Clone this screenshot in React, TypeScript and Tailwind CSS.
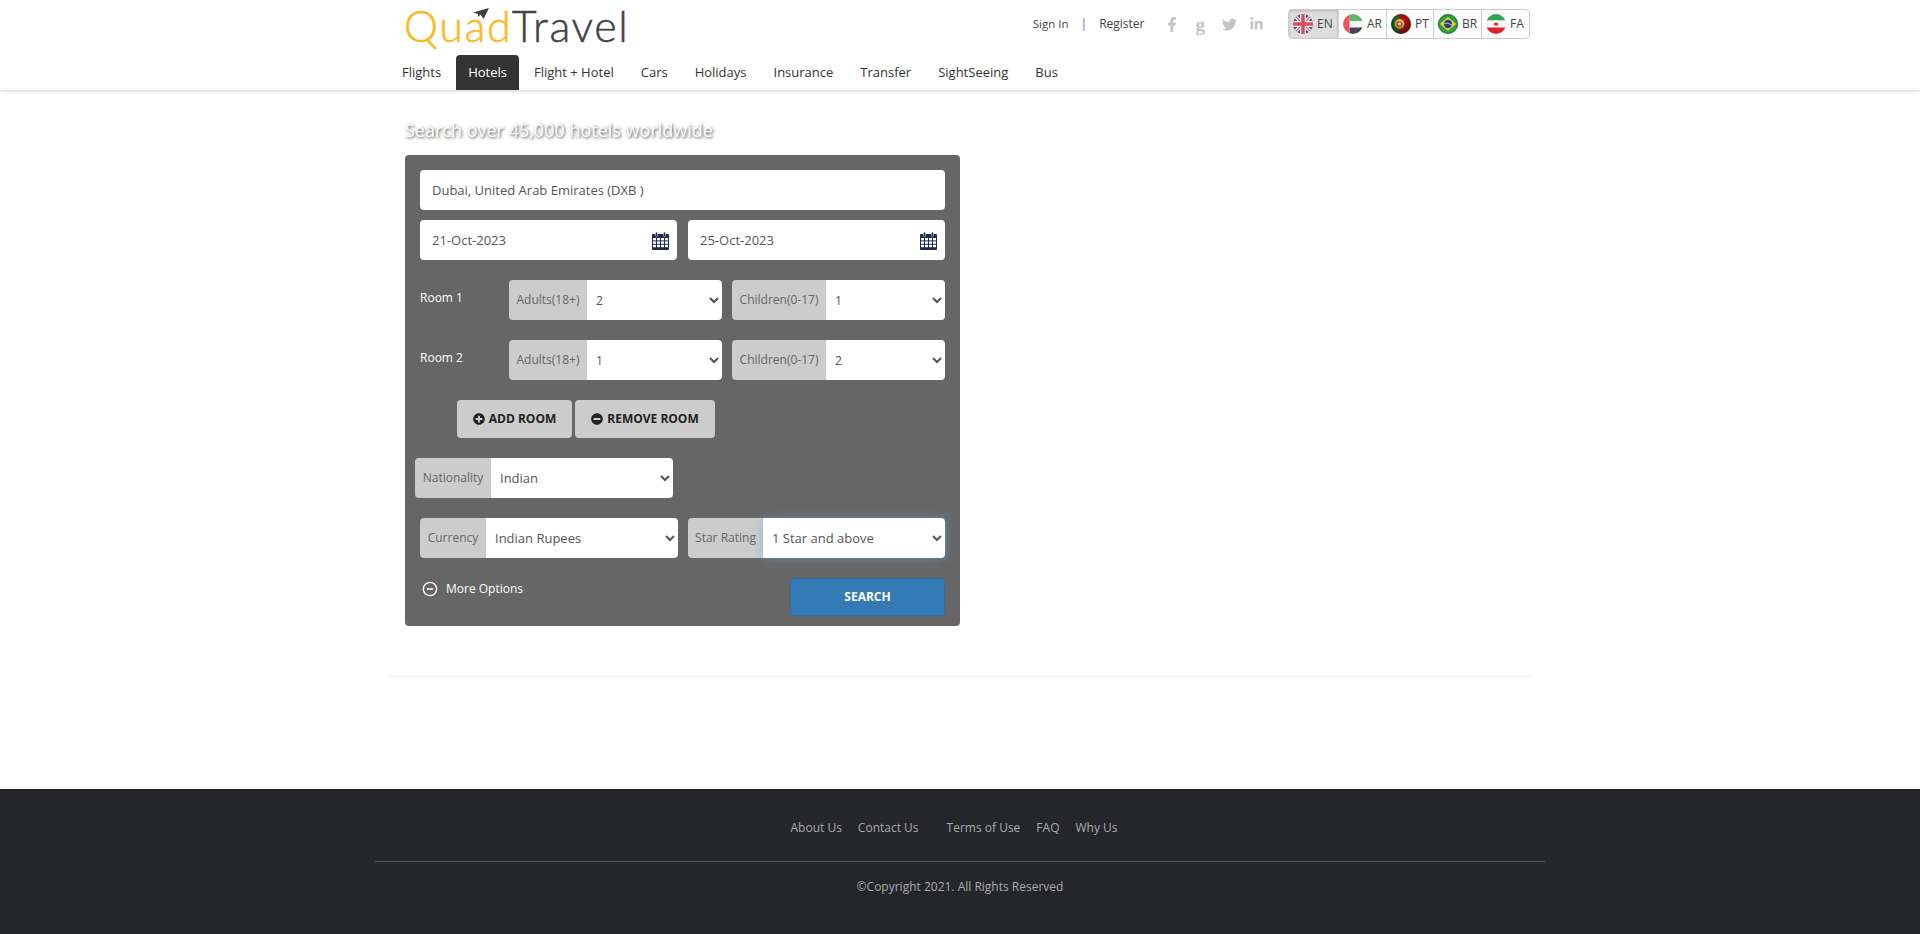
import { ReactNode } from 'react';
import { FaFacebookF, FaLinkedinIn, FaMinusCircle, FaPlusCircle, FaTwitter } from 'react-icons/fa';
import { CircleMinus } from 'lucide-react';

const NAV = ['Flights', 'Hotels', 'Flight + Hotel', 'Cars', 'Holidays', 'Insurance', 'Transfer', 'SightSeeing', 'Bus'];

function FlagEn() {
  return (
    <svg viewBox="0 0 20 20" className="h-5 w-5 shrink-0">
      <defs>
        <clipPath id="c-en"><circle cx="10" cy="10" r="10" /></clipPath>
      </defs>
      <g clipPath="url(#c-en)">
        <rect width="20" height="20" fill="#41479b" />
        <path d="M0 0L20 20M20 0L0 20" stroke="#f5f5f5" strokeWidth="3.5" />
        <path d="M0 0L20 20M20 0L0 20" stroke="#e0556a" strokeWidth="1.2" />
        <path d="M10 0V20M0 10H20" stroke="#f5f5f5" strokeWidth="6" />
        <path d="M10 0V20M0 10H20" stroke="#e0475c" strokeWidth="3.4" />
      </g>
    </svg>
  );
}

function FlagAr() {
  return (
    <svg viewBox="0 0 20 20" className="h-5 w-5 shrink-0">
      <defs>
        <clipPath id="c-ar"><circle cx="10" cy="10" r="10" /></clipPath>
      </defs>
      <g clipPath="url(#c-ar)">
        <rect x="6.5" width="14" height="7" fill="#5cb870" />
        <rect x="6.5" y="7" width="14" height="6.5" fill="#f5f5f5" />
        <rect x="6.5" y="13.5" width="14" height="7" fill="#464655" />
        <rect width="6.5" height="20" fill="#f0565f" />
      </g>
    </svg>
  );
}

function FlagPt() {
  return (
    <svg viewBox="0 0 20 20" className="h-5 w-5 shrink-0">
      <defs>
        <clipPath id="c-pt"><circle cx="10" cy="10" r="10" /></clipPath>
        <radialGradient id="g-pt" cx="50%" cy="35%" r="70%">
          <stop offset="0" stopColor="#000" stopOpacity="0" />
          <stop offset="1" stopColor="#000" stopOpacity="0.55" />
        </radialGradient>
      </defs>
      <g clipPath="url(#c-pt)">
        <rect width="8" height="20" fill="#1f7a2f" />
        <rect x="8" width="12" height="20" fill="#c4161c" />
        <circle cx="8.5" cy="10" r="5" fill="#e8c53a" />
        <circle cx="8.5" cy="10" r="2.8" fill="#e4444a" />
        <circle cx="8.5" cy="10" r="1.5" fill="#f4f4f4" />
        <rect width="20" height="20" fill="url(#g-pt)" />
      </g>
    </svg>
  );
}

function FlagBr() {
  return (
    <svg viewBox="0 0 20 20" className="h-5 w-5 shrink-0">
      <circle cx="10" cy="10" r="10" fill="#2f9e44" />
      <circle cx="10" cy="10" r="9.4" fill="none" stroke="#1c6e2e" strokeWidth="0.8" />
      <path d="M10 3L18 10L10 17L2 10Z" fill="#f5d327" />
      <circle cx="10" cy="10" r="4.2" fill="#27408b" />
      <path d="M6 9.2Q10 8.6 14 11" stroke="#f4f4f4" strokeWidth="0.7" fill="none" />
    </svg>
  );
}

function FlagFa() {
  return (
    <svg viewBox="0 0 20 20" className="h-5 w-5 shrink-0">
      <defs>
        <clipPath id="c-fa"><circle cx="10" cy="10" r="10" /></clipPath>
      </defs>
      <g clipPath="url(#c-fa)">
        <rect width="20" height="6.5" fill="#2ea44f" />
        <rect y="6.5" width="20" height="7" fill="#f5f5f5" />
        <rect y="13.5" width="20" height="6.5" fill="#d9262e" />
        <ellipse cx="10" cy="10" rx="2.2" ry="1.5" fill="#d9262e" />
      </g>
    </svg>
  );
}

// old font-awesome style calendar: two rings over a full grid
function CalendarIcon() {
  return (
    <svg viewBox="0 0 17 18" className="h-[18px] w-[17px] shrink-0" fill="#1f2a4d">
      <rect y="2" width="17" height="16" rx="1" />
      <rect x="3.5" y="0" width="2" height="4.5" rx="1" stroke="#ffffff" strokeWidth="0.5" />
      <rect x="11.5" y="0" width="2" height="4.5" rx="1" stroke="#ffffff" strokeWidth="0.5" />
      <g fill="#ffffff">
        <rect x="1" y="6" width="3" height="2.4" />
        <rect x="5" y="6" width="3" height="2.4" />
        <rect x="9" y="6" width="3" height="2.4" />
        <rect x="13" y="6" width="3" height="2.4" />
        <rect x="1" y="9.4" width="3" height="2.4" />
        <rect x="5" y="9.4" width="3" height="2.4" />
        <rect x="9" y="9.4" width="3" height="2.4" />
        <rect x="13" y="9.4" width="3" height="2.4" />
        <rect x="1" y="12.8" width="3" height="2.4" />
        <rect x="5" y="12.8" width="3" height="2.4" />
        <rect x="9" y="12.8" width="3" height="2.4" />
        <rect x="13" y="12.8" width="3" height="2.4" />
      </g>
    </svg>
  );
}

const LANGS: { code: string; flag: ReactNode; width: string; active?: boolean }[] = [
  { code: 'EN', flag: <FlagEn />, width: 'w-[49px]', active: true },
  { code: 'AR', flag: <FlagAr />, width: 'w-[48px]' },
  { code: 'PT', flag: <FlagPt />, width: 'w-[47px]' },
  { code: 'BR', flag: <FlagBr />, width: 'w-[48px]' },
  { code: 'FA', flag: <FlagFa />, width: 'w-[48px]' },
];

function Logo() {
  return (
    <div className="relative ml-[14px] h-[47px] w-[240px] pt-[1px] font-['Lato',sans-serif] text-[43px] leading-[50px] font-light tracking-[1.6px] [-webkit-text-stroke:0.5px]">
      <span className="text-[#fbb923]">Quad</span>
      <span className="text-[#444444]">Travel</span>
      <svg viewBox="0 0 16 12" className="absolute top-[8px] left-[69px] h-[12px] w-[16px]">
        <path d="M0 4.5L16 0L10.5 11L7.5 6.5L5 9V6Z" fill="#3f3f3f" />
      </svg>
    </div>
  );
}

function Header() {
  return (
    <header className="h-[90px] bg-white shadow-[0_1px_3px_rgba(0,0,0,0.2)]">
      <div className="mx-auto w-[1140px]">
        <div className="flex h-[55px] items-start justify-between">
          <Logo />
          <div className="flex items-center pt-[9px] text-[12px] text-[#444444]">
            <span className="text-[11.5px]">Sign In</span>
            <span className="mx-[12px] text-[#337ab7]">|</span>
            <span>Register</span>
            <div className="mr-[25px] ml-[22px] flex items-center text-[14px] text-[#c4c4c4]">
              <FaFacebookF className="h-[15px] w-[10px]" />
              <span className="ml-[19px] font-['Liberation_Serif',serif] text-[19px] leading-[15px] font-bold">g</span>
              <FaTwitter className="ml-[17px] h-[15px] w-[15px]" />
              <FaLinkedinIn className="ml-[13px] h-[14px] w-[13px]" />
            </div>
            <div className="flex h-[30px] rounded-[4px] border border-[#cccccc]">
              {LANGS.map((l, i) => (
                <div
                  key={l.code}
                  className={`flex items-center gap-[4px] pl-[4px] ${l.width} ${i > 0 ? 'border-l border-[#cccccc]' : ''} ${l.active ? 'bg-[#dddddd] shadow-[inset_0_1px_3px_rgba(0,0,0,0.18)]' : ''}`}
                >
                  {l.flag}
                  <span>{l.code}</span>
                </div>
              ))}
            </div>
          </div>
        </div>
        <nav className="flex h-[35px] gap-[3px] text-[13px]">
          {NAV.map((n) => (
            <span
              key={n}
              className={`flex items-center rounded-t-[4px] px-3 ${n === 'Hotels' ? 'bg-[#333333] text-white' : 'text-[#333333]'}`}
            >
              {n}
            </span>
          ))}
        </nav>
      </div>
    </header>
  );
}

function Picker({
  label,
  labelWidth,
  value,
  options,
  className,
  focus,
  small,
}: {
  label: string;
  labelWidth: string;
  value: string;
  options: string[];
  className: string;
  focus?: boolean;
  small?: boolean;
}) {
  return (
    <div className={`flex h-[40px] ${className}`}>
      <span className={`flex shrink-0 items-center justify-center rounded-l-[4px] bg-[#cccccc] text-[12px] text-[#666666] ${labelWidth}`}>
        {label}
      </span>
      <select
        defaultValue={value}
        className={`min-w-0 flex-1 rounded-r-[4px] bg-white pl-[5px] text-[#555555] outline-none ${small ? 'text-[12px]' : 'text-[13px]'} ${focus ? 'shadow-[0_0_8px_rgba(102,175,233,0.6)]' : ''}`}
      >
        {options.map((o) => (
          <option key={o}>{o}</option>
        ))}
      </select>
    </div>
  );
}

function DateField({ value }: { value: string }) {
  return (
    <div className="flex h-[40px] w-[257px] items-center justify-between rounded-[4px] bg-white pt-[1px] pr-[8px] pl-[12px] text-[13px] text-[#555555]">
      <span>{value}</span>
      <CalendarIcon />
    </div>
  );
}

function RoomRow({ name, adults, children }: { name: string; adults: string; children: string }) {
  return (
    <div className="flex h-[40px] items-start">
      <span className="w-[89px] pt-[9px] text-[12px] font-medium text-white">{name}</span>
      <Picker
        label="Adults(18+)"
        labelWidth="w-[78px]"
        value={adults}
        options={['1', '2', '3', '4']}
        className="w-[213px]"
        small
      />
      <Picker
        label="Children(0-17)"
        labelWidth="w-[94px]"
        value={children}
        options={['0', '1', '2', '3']}
        className="ml-[10px] w-[213px]"
        small
      />
    </div>
  );
}

function SearchPanel() {
  return (
    <div className="w-[555px] rounded-[4px] bg-[#666666] px-[15px] pt-[15px] pb-[10px]">
      <div className="flex h-[40px] items-center rounded-[4px] bg-white px-[12px] pt-[1px] text-[13px] text-[#555555]">
        Dubai, United Arab Emirates (DXB )
      </div>
      <div className="mt-[10px] flex justify-between">
        <DateField value="21-Oct-2023" />
        <DateField value="25-Oct-2023" />
      </div>
      <div className="mt-[20px] flex flex-col gap-[20px]">
        <RoomRow name="Room 1" adults="2" children="1" />
        <RoomRow name="Room 2" adults="1" children="2" />
      </div>
      <div className="mt-[20px] ml-[37px] flex gap-[3px] text-[12px] font-bold text-[#222222]">
        <button className="flex h-[38px] w-[115px] items-center justify-center gap-[4px] rounded-[4px] bg-[#cccccc]">
          <FaPlusCircle className="h-[12px] w-[12px]" /> ADD ROOM
        </button>
        <button className="flex h-[38px] w-[140px] items-center justify-center gap-[4px] rounded-[4px] bg-[#cccccc]">
          <FaMinusCircle className="h-[12px] w-[12px]" /> REMOVE ROOM
        </button>
      </div>
      <Picker
        label="Nationality"
        labelWidth="w-[76px]"
        value="Indian"
        options={['Indian']}
        className="mt-[20px] -ml-[5px] w-[258px]"
      />
      <div className="mt-[20px] flex justify-between">
        <Picker
          label="Currency"
          labelWidth="w-[66px]"
          value="Indian Rupees"
          options={['Indian Rupees']}
          className="w-[258px]"
        />
        <Picker
          label="Star Rating"
          labelWidth="w-[75px]"
          value="1 Star and above"
          options={['1 Star and above']}
          className="w-[257px]"
          focus
        />
      </div>
      <div className="mt-[20px] flex items-start justify-between">
        <div className="flex items-center gap-[8px] pt-[2px] pl-[2px] text-[12px] font-medium text-white">
          <CircleMinus className="h-[16px] w-[16px]" strokeWidth={2} />
          More Options
        </div>
        <button className="h-[38px] w-[155px] rounded-[4px] border border-[#2e6da4] bg-[#337ab7] text-[12px] font-bold text-white">
          SEARCH
        </button>
      </div>
    </div>
  );
}

function Footer() {
  return (
    <footer className="h-[145px] bg-[#25262a] text-[12px] text-[#aaaaaa]">
      <div className="mx-auto w-[1170px]">
        <div className="flex h-[72px] items-center justify-center pt-[6px] pr-[12px]">
          <span>About Us</span>
          <span className="ml-[16px]">Contact Us</span>
          <span className="ml-[28px]">Terms of Use</span>
          <span className="ml-[16px]">FAQ</span>
          <span className="ml-[16px]">Why Us</span>
        </div>
        <div className="border-t border-[#555555] pt-[16px] text-center">©Copyright 2021. All Rights Reserved</div>
      </div>
    </footer>
  );
}

export default function App() {
  return (
    <div className="flex min-h-[934px] flex-col bg-white font-['Open_Sans',sans-serif]">
      <Header />
      <main className="mx-auto h-[699px] w-[1140px]">
        <div className="border-b border-[#eeeeee] pb-[50px] pl-[15px]">
          <h1 className="pt-[27px] pb-[12px] text-[18px] leading-[26px] font-normal text-white [text-shadow:1px_1px_3px_rgba(0,0,0,0.75)]">
            Search over 45,000 hotels worldwide
          </h1>
          <SearchPanel />
        </div>
      </main>
      <Footer />
    </div>
  );
}
